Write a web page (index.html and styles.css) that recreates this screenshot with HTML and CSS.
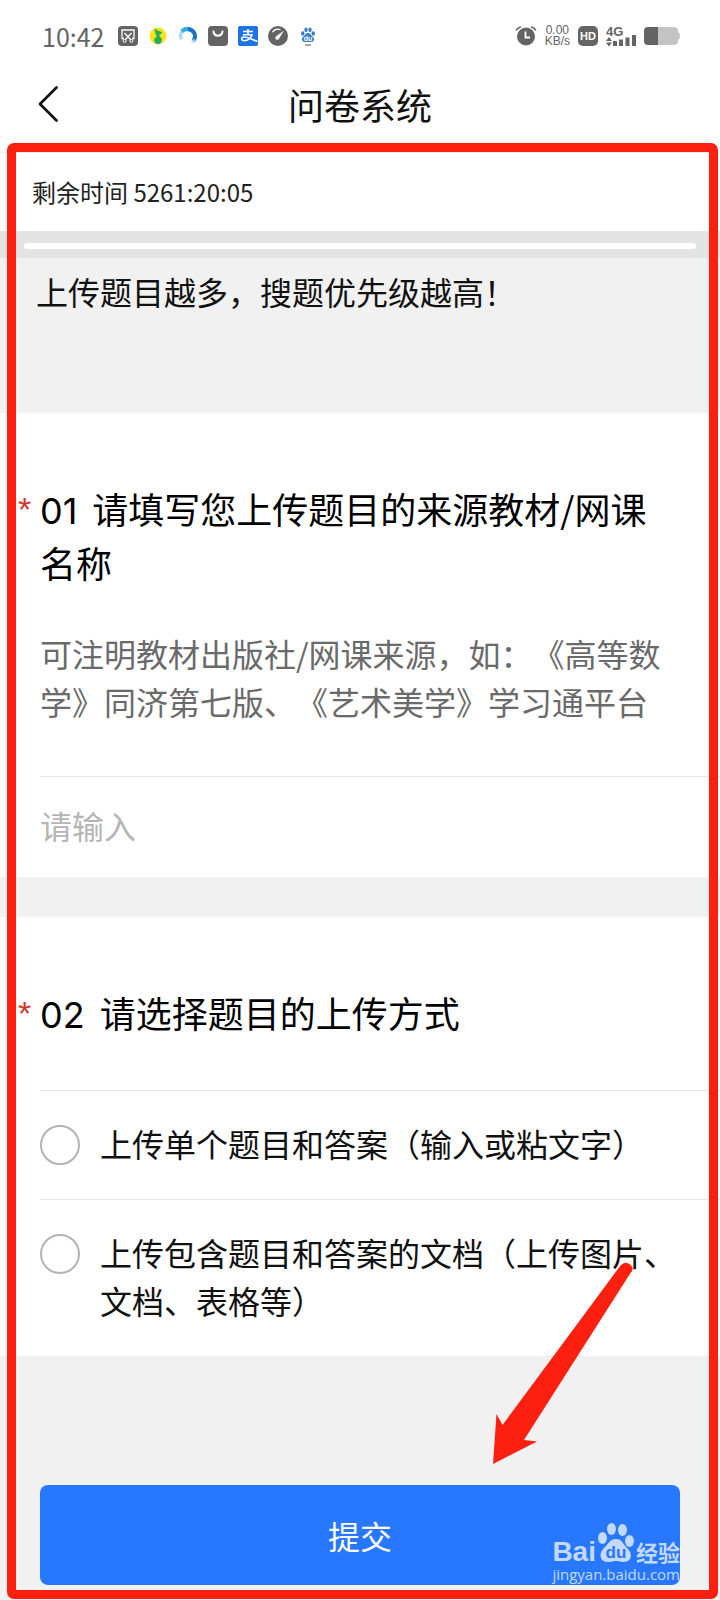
FILE: index.html
```
<!DOCTYPE html>
<html lang="zh-CN">
<head>
    <meta charset="UTF-8">
    <meta name="viewport" content="width=device-width, initial-scale=1.0">
    <title>问卷系统</title>
    <link rel="stylesheet" href="styles.css">
</head>
<body>

    <!-- Phone status bar -->
    <div class="status-bar">
        <div class="status-left">
            <span class="clock">10:42</span>
            <svg width="20" height="20" viewBox="0 0 20 20">
                <rect width="20" height="20" rx="4" fill="#646464"/>
                <path d="M6 12.500H4V4h12v8.500h-2M6.500 7l6 6.500M13.500 7l-6 6.500" fill="none" stroke="#fff" stroke-width="1.300"/>
                <circle cx="6.600" cy="14.800" r="1.500" fill="none" stroke="#fff"/>
                <circle cx="13.400" cy="14.800" r="1.500" fill="none" stroke="#fff"/>
            </svg>
            <svg width="20" height="20" viewBox="0 0 20 20">
                <circle cx="10" cy="10" r="8.500" fill="#f8e41c"/>
                <circle cx="10" cy="14.300" r="3.700" fill="#1fae5e"/>
                <path d="M6.500 2.500c2 1.500 4 2.500 7.500 3.500-.5 1.800-1.500 2.500-3 2.800l2.700 5.200-2.200 1L7.500 8z" fill="#1fae5e"/>
            </svg>
            <svg width="20" height="20" viewBox="0 0 20 20">
                <path d="M3.500 13.500A7 7 0 0 1 5 4.800" fill="none" stroke="#a5dcf7" stroke-width="3.500"/>
                <path d="M4 5.500A7 7 0 0 1 12 3.500" fill="none" stroke="#38a9ea" stroke-width="4"/>
                <path d="M10 3.200a7 7 0 0 1 5.500 11.300" fill="none" stroke="#1872c9" stroke-width="4"/>
                <path d="M13 15.200q3 2.500 5 .5-1-.5-1.500-3z" fill="#9bd3f2"/>
            </svg>
            <svg width="20" height="20" viewBox="0 0 20 20">
                <rect width="20" height="20" rx="4" fill="#646464"/>
                <path d="M5.500 5.500c.8 5.500 8.200 5.500 9 0" fill="none" stroke="#fff" stroke-width="2" stroke-linecap="round"/>
            </svg>
            <svg width="20" height="20" viewBox="0 0 20 20">
                <rect width="20" height="20" rx="2" fill="#1b74e4"/>
                <path d="M5 5.500h10M10 3v6M5 8.800h9c-1 3-4 6-7.500 6-4 0-3.500-4 0-3.800 4 .2 8 3 13 4.500" fill="none" stroke="#fff" stroke-width="1.600"/>
            </svg>
            <svg width="20" height="20" viewBox="0 0 20 20">
                <circle cx="10" cy="10" r="10" fill="#646464"/>
                <path d="M4.500 6.200a7 7 0 0 1 8-2.500" fill="none" stroke="#fff" stroke-width="1.200"/>
                <path d="M15.800 4.800L8.600 10a2 2 0 1 0 2.600 2.600z" fill="#fff"/>
            </svg>
            <svg width="20" height="20" viewBox="0 0 20 20">
                <g fill="#3a7cc4">
                    <ellipse cx="4.800" cy="7.500" rx="1.700" ry="2.300"/>
                    <ellipse cx="8" cy="3.800" rx="1.700" ry="2.400"/>
                    <ellipse cx="12" cy="3.800" rx="1.700" ry="2.400"/>
                    <ellipse cx="15.200" cy="7.500" rx="1.700" ry="2.300"/>
                    <path d="M10 7c2.500 0 3 2.500 5 4s1 5-1.500 5h-7C4 16 3 12.500 5 11s2.500-4 5-4z"/>
                </g>
                <text x="10" y="15" class="paw-small">du</text>
                <rect x="7" y="18.500" width="6" height="1" fill="#555"/>
            </svg>
        </div>
        <div class="status-right">
            <svg width="22" height="20" viewBox="0 0 22 20">
                <circle cx="11" cy="10.500" r="9" fill="#646464"/>
                <path d="M1.200 4.500q1.500-3 4.800-3.500M16 1q3.300.5 4.800 3.500" fill="none" stroke="#646464" stroke-width="1.600"/>
                <path d="M10.500 5.500v6h4.500" fill="none" stroke="#fff" stroke-width="1.800"/>
            </svg>
            <span class="net-speed"><span>0.00</span><span>KB/s</span></span>
            <svg width="20" height="20" viewBox="0 0 20 20">
                <rect width="20" height="20" rx="5" fill="#646464"/>
                <text x="10" y="14" class="hd">HD</text>
            </svg>
            <svg width="30" height="22" viewBox="0 0 30 22">
                <text x="0" y="11" class="net-type">4G</text>
                <path d="M0 16l3-4 3 4zM0 17.500h6L3 21.500z" fill="#646464"/>
                <path d="M7 16h4v5H7zM13 14.500h4V21h-4zM19.500 12.500h4V21h-4zM26 10h4v11h-4z" fill="#646464"/>
            </svg>
            <svg width="36" height="18" viewBox="0 0 36 18">
                <path d="M13 0h17q4 0 4 4v1q2 1 2 4t-2 4v1q0 4-4 4H13z" fill="#c4c4c4"/>
                <path d="M14 0H4Q0 0 0 4v10q0 4 4 4h10z" fill="#646464"/>
            </svg>
        </div>
    </div>

    <header class="header">
        <button class="back" type="button" aria-label="返回">
            <svg width="20" height="36" viewBox="0 0 20 36">
                <path d="M18.500 1.500L2 18l16.500 16.500" fill="none" stroke="#111" stroke-width="2.600" stroke-linecap="round" stroke-linejoin="round"/>
            </svg>
        </button>
        <h1>问卷系统</h1>
    </header>

    <main class="survey">
        <p class="timer">剩余时间 5261:20:05</p>
        <div class="progress"><div class="track"></div></div>
        <p class="intro">上传题目越多，搜题优先级越高！</p>

        <form>
            <section class="question">
                <h2 class="title">
                    <span class="required">*</span>
                    <label for="source"><span class="number">01</span>请填写您上传题目的来源教材/网课名称</label>
                </h2>
                <p class="hint">可注明教材出版社/网课来源，如：《高等数学》同济第七版、《艺术美学》学习通平台</p>
                <input class="answer" type="text" id="source" placeholder="请输入">
            </section>

            <section class="question">
                <h2 class="title">
                    <span class="required">*</span>
                    <span><span class="number">02</span>请选择题目的上传方式</span>
                </h2>
                <div class="options">
                    <label class="option">
                        <input type="radio" name="method" value="single">
                        <span>上传单个题目和答案（输入或粘文字）</span>
                    </label>
                    <label class="option">
                        <input type="radio" name="method" value="document">
                        <span>上传包含题目和答案的文档（上传图片、文档、表格等）</span>
                    </label>
                </div>
            </section>

            <div class="footer">
                <!-- Arrow pointing at the submit button -->
                <svg class="arrow" width="140" height="204" viewBox="0 0 140 204">
                    <path d="M127.500 4.500Q132-.5 137 3.500T137.500 12L31 179l13 1.500L0 203l3.500-50 6 11z" fill="#fd2010"/>
                </svg>
                <button class="submit" type="submit">提交</button>
                <div class="watermark">
                    <div class="brand">
                        <span class="bai">Bai</span>
                        <svg width="38" height="42" viewBox="0 0 38 42">
                            <g fill="#c3d9ff">
                                <ellipse cx="5.500" cy="16" rx="4.500" ry="6"/>
                                <ellipse cx="14.500" cy="7" rx="4.500" ry="6"/>
                                <ellipse cx="25.500" cy="8" rx="4.500" ry="6"/>
                                <ellipse cx="32.500" cy="19" rx="4.500" ry="6"/>
                                <path d="M19 17c6 0 7 5 11 9 6 5 5 14-3 14-4 0-5-1-8-1s-4 1-8 1c-8 0-10-8-4-14 4-4 6-9 12-9z"/>
                            </g>
                            <text x="19" y="36" class="paw-large">du</text>
                        </svg>
                        <span class="jingyan">经验</span>
                    </div>
                    <div class="site">jingyan.baidu.com</div>
                </div>
            </div>
        </form>

        <div class="frame"></div>
    </main>

</body>
</html>
```
FILE: styles.css
```
* {
    box-sizing: border-box;
}

body {
    margin: 0;
    font-family: "Noto Sans CJK SC", sans-serif;
    font-weight: 400;
    text-spacing-trim: space-all;
    background-color: #fff;
    color: #111;
}

h1, h2, p {
    margin: 0;
    font-weight: 400;
}

/* Status bar */
.status-bar {
    display: flex;
    justify-content: space-between;
    align-items: center;
    height: 72px;
    padding: 0 40px 0 42px;
    color: #646464;
}

.status-left {
    display: flex;
    align-items: center;
    gap: 10px;
}

.clock {
    margin-right: 4px;
    font-size: 25px;
    line-height: 32px;
}

.status-right {
    display: flex;
    align-items: center;
    gap: 8px;
}

.net-speed {
    display: flex;
    flex-direction: column;
    align-items: center;
    font-family: "Liberation Sans", sans-serif;
    font-size: 12px;
    line-height: 11px;
}

.hd {
    font: bold 11px "Liberation Sans", sans-serif;
    fill: #fff;
    text-anchor: middle;
}

.net-type {
    font: bold 13px "Liberation Sans", sans-serif;
    fill: #646464;
}

.paw-small {
    font: bold 7px "Liberation Sans", sans-serif;
    fill: #fff;
    text-anchor: middle;
}

/* Header */
.header {
    display: grid;
    grid-template-columns: 40px 1fr 40px;
    align-items: center;
    height: 81px;
    padding: 0 32px 16px;
    border-bottom: 1px solid #eee;
}

.header h1 {
    text-align: center;
    font-size: 36px;
    line-height: 48px;
}

.back {
    display: flex;
    padding: 0 6px;
    border: none;
    background: none;
    cursor: pointer;
}

/* Survey */
.survey {
    position: relative;
}

.timer {
    padding: 20px 32px;
    font-size: 24px;
    line-height: 38px;
    color: #222;
}

.progress {
    padding: 12px 24px 9px;
    background-color: #e4e4e4;
}

.track {
    height: 6px;
    border-radius: 3px;
    background-color: #fff;
}

.intro {
    padding: 9px 36px 98px;
    font-size: 32px;
    line-height: 48px;
    background-color: #f1f1f1;
}

.question {
    padding: 68px 0 0 40px;
    background-color: #fff;
}

.question + .question {
    border-top: 40px solid #f1f1f1;
}

.title {
    display: flex;
    margin-left: -22px;
    padding-right: 40px;
    font-size: 36px;
    line-height: 54px;
    color: #000;
}

.required {
    flex: 0 0 22px;
    padding-top: 3px;
    font-family: "Liberation Sans", sans-serif;
    font-size: 34px;
    line-height: 50px;
    color: #d0392f;
}

.number {
    margin-right: 15px;
    font-family: Inter, sans-serif;
    line-height: 36px;
}

.hint {
    margin-top: 40px;
    padding-right: 40px;
    font-size: 32px;
    line-height: 48px;
    color: #6a6a6a;
}

.answer {
    display: block;
    width: 100%;
    height: 101px;
    margin-top: 51px;
    padding: 0 40px 4px 0;
    border: none;
    border-top: 1px solid #e6e6e6;
    border-radius: 0;
    outline: none;
    font-family: inherit;
    font-size: 32px;
    color: #111;
}

.answer::placeholder {
    color: #b5b5b5;
}

.options {
    margin-top: 51px;
}

.option {
    display: flex;
    gap: 20px;
    padding: 28px 40px 32px 0;
    border-top: 1px solid #e6e6e6;
    font-size: 32px;
    line-height: 48px;
    cursor: pointer;
}

.option input {
    appearance: none;
    flex: 0 0 40px;
    height: 40px;
    margin: 6px 0 0;
    border: 2px solid #b4b4b4;
    border-radius: 50%;
    background-color: #fff;
}

.option input:checked {
    border: 12px solid #2777ff;
}

/* Submit area */
.footer {
    position: relative;
    padding: 129px 40px 15px;
    background-color: #f1f1f1;
}

.submit {
    display: block;
    width: 100%;
    height: 100px;
    border: none;
    border-radius: 8px;
    background-color: #2777ff;
    color: #fff;
    font-family: inherit;
    font-size: 32px;
    cursor: pointer;
}

.arrow {
    position: absolute;
    right: 87px;
    bottom: 135px;
    z-index: 1;
}

.watermark {
    position: absolute;
    right: 40px;
    bottom: 16px;
    color: #c3d9ff;
    pointer-events: none;
}

.brand {
    display: flex;
    align-items: flex-end;
    justify-content: space-between;
}

.bai {
    font: bold 28px/24px "Liberation Sans", sans-serif;
}

.jingyan {
    font-size: 22px;
    line-height: 26px;
    font-weight: 700;
}

.paw-large {
    font: bold 17px "Liberation Sans", sans-serif;
    fill: #2777ff;
    text-anchor: middle;
}

.site {
    font: 15px/20px "Open Sans", sans-serif;
}

/* Red outline around the questionnaire */
.frame {
    position: absolute;
    inset: -10px 2px 1px 7px;
    border: 9px solid #fd2010;
    border-radius: 7px;
    pointer-events: none;
}
```
